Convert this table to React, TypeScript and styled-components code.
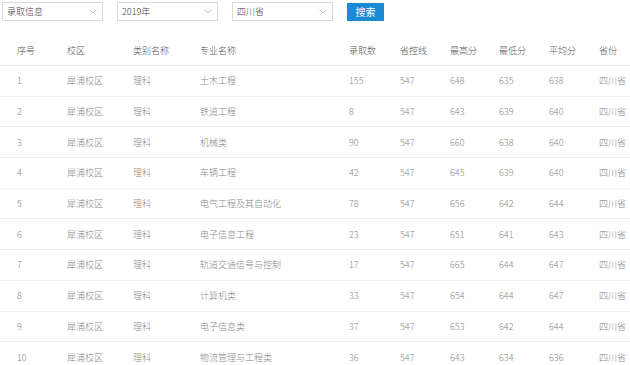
import React from 'react';
import styled, { createGlobalStyle } from 'styled-components';

const GlobalStyle = createGlobalStyle`
  body {
    margin: 0;
    background: #fff;
    font-family: "Noto Sans CJK SC", "Liberation Sans", sans-serif;
  }
`;

const rows = [
  ['1', '犀浦校区', '理科', '土木工程', '155', '547', '648', '635', '638', '四川省'],
  ['2', '犀浦校区', '理科', '铁道工程', '8', '547', '643', '639', '640', '四川省'],
  ['3', '犀浦校区', '理科', '机械类', '90', '547', '660', '638', '640', '四川省'],
  ['4', '犀浦校区', '理科', '车辆工程', '42', '547', '645', '639', '640', '四川省'],
  ['5', '犀浦校区', '理科', '电气工程及其自动化', '78', '547', '656', '642', '644', '四川省'],
  ['6', '犀浦校区', '理科', '电子信息工程', '23', '547', '651', '641', '643', '四川省'],
  ['7', '犀浦校区', '理科', '轨道交通信号与控制', '17', '547', '665', '644', '647', '四川省'],
  ['8', '犀浦校区', '理科', '计算机类', '33', '547', '654', '644', '647', '四川省'],
  ['9', '犀浦校区', '理科', '电子信息类', '37', '547', '653', '642', '644', '四川省'],
  ['10', '犀浦校区', '理科', '物流管理与工程类', '36', '547', '643', '634', '636', '四川省'],
];

const headers = ['序号', '校区', '类别名称', '专业名称', '录取数', '省控线', '最高分', '最低分', '平均分', '省份'];

const App = () => {
  return (
    <>
      <GlobalStyle />
      <Page>
        <Toolbar>
          <SelectBox>
            <span>录取信息</span>
            <Chevron />
          </SelectBox>
          <SelectBox>
            <span>2019年</span>
            <Chevron />
          </SelectBox>
          <SelectBox>
            <span>四川省</span>
            <Chevron />
          </SelectBox>
          <SearchBtn>搜索</SearchBtn>
        </Toolbar>

        <Table>
          <HeadRow>
            {headers.map((h) => (
              <Cell key={h} $head>
                {h}
              </Cell>
            ))}
          </HeadRow>
          {rows.map((r) => (
            <Row key={r[0]}>
              {r.map((c, i) => (
                <Cell key={i}>{c}</Cell>
              ))}
            </Row>
          ))}
        </Table>
      </Page>
    </>
  );
};

export default App;

const Chevron = () => (
  <svg width="8" height="5" viewBox="0 0 8 5">
    <path d="M0.5 0.5 L4 4 L7.5 0.5" fill="none" stroke="#b5b5b5" strokeWidth="0.8" />
  </svg>
);

const Page = styled.div`
  width: 630px;
  height: 365px;
  overflow: hidden;
`;

const Toolbar = styled.div`
  display: flex;
  align-items: center;
  gap: 14px;
  padding: 2px 2px 0;
`;

//셀렉트 박스
const SelectBox = styled.div`
  box-sizing: border-box;
  width: 101px;
  height: 19px;
  border: 1px solid #dadada;
  display: flex;
  align-items: center;
  justify-content: space-between;
  padding: 0 5px 0 4px;
  font-size: 9px;
  font-weight: 300;
  color: #444;
`;

const SearchBtn = styled.button`
  width: 37px;
  height: 18px;
  border: none;
  padding: 0;
  background: #1a8ad4;
  color: #fff;
  font-size: 10px;
  font-family: "Noto Sans CJK SC", sans-serif;
`;

const Table = styled.div`
  margin-top: 14px;
`;

const cols = '17px 50px 66px 67px 149px 51px 50px 49px 50px 50px 1fr';

const HeadRow = styled.div`
  display: grid;
  grid-template-columns: ${cols};
  height: 30px;
  align-items: center;
  border-bottom: 1px solid #e8e8e8;
  &::before {
    content: '';
  }
`;

const Row = styled.div`
  display: grid;
  grid-template-columns: ${cols};
  height: 29.7px;
  align-items: center;
  border-bottom: 1px solid #f0f0f0;
  &::before {
    content: '';
  }
`;

const Cell = styled.div<{ $head?: boolean }>`
  font-size: 9px;
  font-weight: 300;
  color: ${(p) => (p.$head ? '#555' : '#888')};
  white-space: nowrap;
`;
